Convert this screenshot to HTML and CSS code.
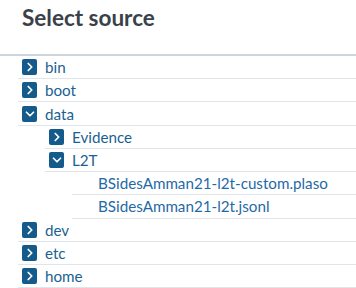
FILE: index.html
```html
<!DOCTYPE html>
<html lang="en">
<head>
  <meta charset="UTF-8">
  <title>Select source</title>
  <link rel="stylesheet" href="styles.css">
</head>
<body>
  <div class="panel">
    <h2 class="title">Select source</h2>

    <ul class="tree">
      <li class="row lvl0"><span class="tog"><svg viewBox="0 0 16 16"><path d="M6 4l4 4-4 4"/></svg></span>bin</li>
      <li class="row lvl0"><span class="tog"><svg viewBox="0 0 16 16"><path d="M6 4l4 4-4 4"/></svg></span>boot</li>
      <li class="row lvl0"><span class="tog"><svg viewBox="0 0 16 16"><path d="M4 6l4 4 4-4"/></svg></span>data</li>
      <li class="row lvl1"><span class="tog"><svg viewBox="0 0 16 16"><path d="M6 4l4 4-4 4"/></svg></span>Evidence</li>
      <li class="row lvl1"><span class="tog"><svg viewBox="0 0 16 16"><path d="M4 6l4 4 4-4"/></svg></span>L2T</li>
      <li class="row lvl2 file"><span class="tog"></span>BSidesAmman21-l2t-custom.plaso</li>
      <li class="row lvl2 file"><span class="tog"></span>BSidesAmman21-l2t.jsonl</li>
      <li class="row lvl0"><span class="tog"><svg viewBox="0 0 16 16"><path d="M6 4l4 4-4 4"/></svg></span>dev</li>
      <li class="row lvl0"><span class="tog"><svg viewBox="0 0 16 16"><path d="M6 4l4 4-4 4"/></svg></span>etc</li>
      <li class="row lvl0"><span class="tog"><svg viewBox="0 0 16 16"><path d="M6 4l4 4-4 4"/></svg></span>home</li>
    </ul>
  </div>
</body>
</html>
```

FILE: styles.css
```css
body {
  margin: 0;
  background: #fff;
  font-family: Lato, "Open Sans", sans-serif;
  overflow: hidden;
}
.title {
  margin: 0;
  padding: 4px 22px 0 22px;
  height: 56px;
  box-sizing: border-box;
  font-size: 22.5px;
  font-weight: 700;
  color: #3a4149;
  border-bottom: 2px solid #ccd4dc;
}
.tree {
  list-style: none;
  margin: 0;
  padding: 0;
}
.row {
  display: flex;
  align-items: center;
  height: 22.22px;
  border-bottom: 1px solid #dfe5ea;
  font-size: 15.2px;
  color: #1c5f92;
}
.lvl0 { margin-left: 18px; }
.lvl1 { margin-left: 45px; }
.lvl2 { margin-left: 72px; }
.file { color: #1f6aa6; }
.tog {
  width: 15px;
  height: 16px;
  margin: 0 8px 0 4px;
  flex: none;
  display: flex;
  align-items: center;
  justify-content: center;
  background: #145b8c;
  border-radius: 2px;
}
.file .tog {
  background: none;
  margin-right: 7px;
}
.tog svg {
  width: 14px;
  height: 14px;
  fill: none;
  stroke: #fff;
  stroke-width: 2;
  stroke-linecap: round;
  stroke-linejoin: round;
}
```
